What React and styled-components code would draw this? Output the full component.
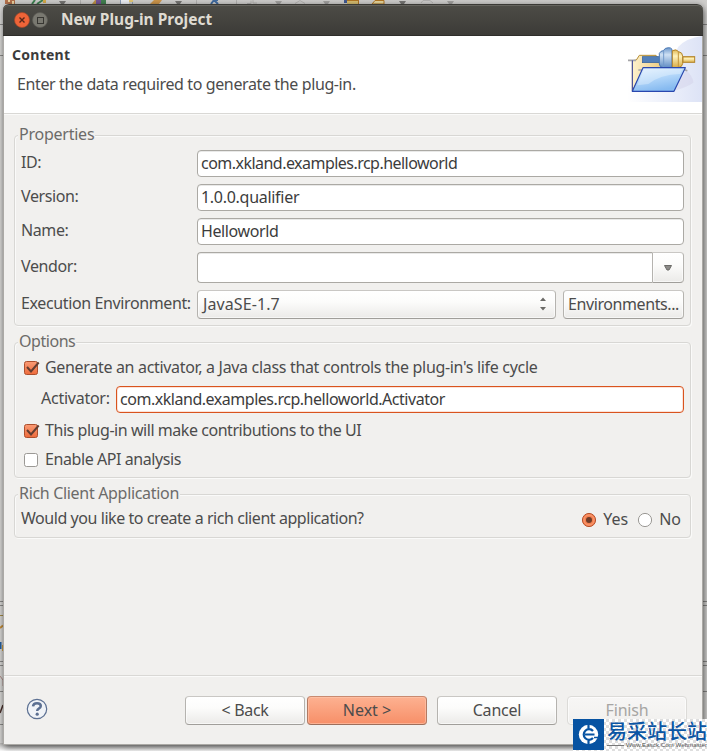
import React, { useState } from "react";
import styled, { createGlobalStyle, css } from "styled-components";

const GlobalStyle = createGlobalStyle`
  * {
    box-sizing: border-box;
  }
  body {
    margin: 0;
    overflow: hidden;
    font-family: "Noto Sans", "Liberation Sans", sans-serif;
    font-size: 16px;
    line-height: 20px;
    color: #4c4c4c;
  }
`;

const Desktop = styled.div`
  position: relative;
  width: 707px;
  height: 751px;
  padding: 4px 4px 6px 3px;
  overflow: hidden;
  background: linear-gradient(180deg, #cfcecc 0, #dad9d7 10px, #dad9d7 100%);
`;

const Backdrop = styled.svg`
  position: absolute;
  left: 0;
  top: 0;
`;

const Dialog = styled.div`
  position: relative;
  display: flex;
  flex-direction: column;
  width: 700px;
  height: 741px;
  border-radius: 6px 6px 0 0;
  background: #f1f0ee;
  box-shadow: 1px 2px 7px rgba(0, 0, 0, 0.65);
`;

const TitleBar = styled.div`
  display: flex;
  align-items: center;
  height: 32px;
  padding-left: 11px;
  border-radius: 6px 6px 0 0;
  border-top: 1px solid #3a3935;
  border-bottom: 1px solid #2f2e2b;
  background: linear-gradient(#4d4c46, #3c3b37);
  box-shadow: inset 0 1px #65645e;
`;

const TitleIcon = styled.svg`
  display: block;
  margin-right: 2px;
`;

const Title = styled.div`
  margin: -2px 0 0 11px;
  font-size: 15.5px;
  font-weight: bold;
  color: #dfdbd2;
`;

const Frame = styled.div`
  flex: 1;
  display: flex;
  flex-direction: column;
  border: 1px solid #aba9a5;
  border-top: 0;
`;

const Header = styled.div`
  display: flex;
  justify-content: space-between;
  height: 78px;
  background: #fff;
  border-bottom: 1px solid #d9d8d5;
`;

const HeaderText = styled.div`
  padding: 9px 0 0 8px;
`;

const Heading = styled.div`
  font-size: 14px;
  font-weight: bold;
  letter-spacing: 0.27px;
  color: #3c3c3c;
`;

const Message = styled.div`
  padding: 9px 0 0 5px;
  letter-spacing: -0.38px;
`;

const Page = styled.div`
  flex: 1;
  display: flex;
  flex-direction: column;
  gap: 16px;
  padding: 20px 11px 0 10px;
  border-top: 1px solid #fafaf9;
`;

const Group = styled.section`
  height: ${(p) => p.$height}px;
  border: 1px solid #d8d7d4;
  border-radius: 4px;
  box-shadow: 1px 1px #fafaf9, inset 1px 1px #fafaf9;
`;

const Legend = styled.div`
  width: max-content;
  margin: -12px 0 0 3px;
  padding: 0 1px;
  background: #f1f0ee;
  color: #6c6b69;
  letter-spacing: ${(p) => p.$spacing}px;
`;

const Fields = styled.div`
  display: flex;
  flex-direction: column;
  gap: 7px;
  padding: 6px 6px 0;
`;

const FieldRow = styled.div`
  display: flex;
  align-items: stretch;
`;

const Label = styled.label`
  display: flex;
  align-items: center;
  width: ${(p) => p.$width || 176}px;
  padding-bottom: 3px;
  white-space: nowrap;
  letter-spacing: ${(p) => p.$spacing}px;
`;

const Input = styled.input`
  flex: 1;
  min-width: 0;
  height: 27px;
  padding: 0 3px 2px;
  border: 1px solid ${(p) => (p.$focused ? "#d9531e" : "#aba9a4")};
  border-radius: 4px;
  outline: 0;
  background: #fff;
  box-shadow: ${(p) =>
    p.$focused ? "inset 0 0 0 1px #fbe3d9" : "inset 0 1px #e9e9e8"};
  font: inherit;
  color: #3c3c3c;
  letter-spacing: ${(p) => p.$spacing}px;
`;

const raised = css`
  border: 1px solid #b5b3af;
  border-top-color: #c9c7c4;
  border-bottom-color: #a09e9a;
  background: linear-gradient(#fff, #fcfcfb 40%, #ebeae8);
  box-shadow: inset 0 0 0 1px rgba(255, 255, 255, 0.6);
`;

const Combo = styled.div`
  flex: 1;
  display: flex;
  height: 31px;
`;

const ComboText = styled.div`
  flex: 1;
  border: 1px solid #aba9a4;
  border-right: 0;
  border-radius: 4px 0 0 4px;
  background: #fff;
  box-shadow: inset 0 1px #e9e9e8;
`;

const ComboButton = styled.div`
  ${raised}
  display: flex;
  align-items: center;
  justify-content: center;
  width: 32px;
  border-radius: 0 4px 4px 0;
`;

const Select = styled.div`
  ${raised}
  display: flex;
  align-items: center;
  justify-content: space-between;
  width: 359px;
  height: 29px;
  margin-right: 7px;
  padding: 0 8px 1px 5px;
  border-radius: 4px;
  letter-spacing: 0.1px;
`;

const Button = styled.button`
  ${raised}
  width: ${(p) => p.$width || 120}px;
  height: 29px;
  padding: 0 0 1px;
  border-radius: 4px;
  font: inherit;
  line-height: 20px;
  color: #4c4c4c;
  letter-spacing: ${(p) => p.$spacing || 0}px;
  ${(p) =>
    p.$primary &&
    css`
      border-color: #c98a70 #b27a63 #9d6e5b;
      background: linear-gradient(#fdb191, #f78f68);
      box-shadow: inset 0 0 0 1px rgba(255, 200, 175, 0.6);
    `}
  &:disabled {
    border-color: #dcdbd8;
    background: linear-gradient(#f7f6f5, #f1f0ee);
    color: #a6a5a3;
  }
`;

const Options = styled.div`
  padding: 5px 6px 0 9px;
`;

const CheckRow = styled.div`
  display: flex;
  gap: 6px;
  height: 20px;
  margin-top: ${(p) => p.$top}px;
  letter-spacing: ${(p) => p.$spacing}px;
`;

const CheckIcon = styled.svg`
  display: block;
  margin-top: 3px;
  overflow: visible;
`;

const ActivatorRow = styled(FieldRow)`
  margin-top: 9px;
  padding-left: 17px;
`;

const Question = styled.div`
  display: flex;
  justify-content: space-between;
  padding: 5px 9px 0 6px;
  letter-spacing: -0.44px;
`;

const Radios = styled.div`
  display: flex;
  gap: 10px;
  padding-top: 1px;
  letter-spacing: 0;
`;

const Radio = styled.label`
  display: flex;
  gap: 6px;
`;

const Footer = styled.div`
  display: flex;
  height: 69px;
  padding: 20px 15px 0 22px;
  border-top: 1px solid #d9d8d5;
  box-shadow: inset 0 1px #fafaf9;
`;

const Help = styled.svg`
  display: block;
  margin-top: 2px;
`;

const Buttons = styled.div`
  flex: 1;
  display: flex;
  justify-content: flex-end;
  gap: 10px;
`;

const Navigation = styled.div`
  display: flex;
  gap: 2px;
`;

const Watermark = styled.div`
  position: absolute;
  right: 0;
  bottom: 0;
  display: flex;
  width: 134px;
  height: 32px;
  background: repeating-conic-gradient(#dedede 0 25%, #fff 0 50%) 0 0 / 6px 6px;
`;

const WatermarkLogo = styled.svg`
  flex: none;
`;

const WatermarkText = styled.div`
  flex: 1;
  min-width: 0;
  padding: 2px 0 0 3px;
  white-space: nowrap;
`;

const WatermarkName = styled.div`
  height: 21px;
  font: 500 20px/20px "Noto Sans CJK SC", sans-serif;
  color: #0a55a4;
`;

const WatermarkUrl = styled.div`
  display: flex;
  align-items: center;
  gap: 2px;
  font: 6.2px/6px "Liberation Sans", sans-serif;
  color: #555;

  &::before {
    content: "";
    width: 17px;
    height: 1px;
    background: #777;
  }
`;

const DesktopDetails = () => (
  <Backdrop width="707" height="751">
    <defs>
      <linearGradient id="floor" x1="0" y1="0" x2="0" y2="1">
        <stop offset="0" stopColor="#b8b7b5" />
        <stop offset="1" stopColor="#fff" />
      </linearGradient>
    </defs>
    <rect x="0" y="743" width="707" height="8" fill="url(#floor)" />
    <path d="M5 0h10v4H5z" fill="#b4714c" />
    <path d="M8 0h2v2H8zM12 1h2v3h-2z" fill="#f1d6a2" />
    <path d="M32 4l3-4M37 4l6-4" stroke="#3f8352" strokeWidth="2" />
    <path d="M43 0h3v3h-3z" fill="#d8ac49" />
    <path d="M92 4l3-4h4v4z" fill="#c09446" />
    <path d="M96 0h6v4h-6z" fill="#755597" />
    <path d="M101 0h5v4h-5z" fill="#438252" />
    <path d="M120.500 4V0M132.500 0v4" stroke="#8d9fba" />
    <path d="M121 0h8v4h-8z" fill="#eef1f6" />
    <path d="M129 0h4v2h-4z" fill="#e5c975" />
    <path d="M150 4l4-4h8l-3 4z" fill="#cf974b" />
    <path d="M211 4l3-4 4 4M215 0h3" stroke="#426da2" strokeWidth="2" fill="none" />
    <path d="M347 1h11v3h-11z" fill="#dac071" />
    <path d="M346 0.500h12M358.500 0v4" stroke="#b37724" />
    <path d="M344 0h3v3h-3z" fill="#435c95" />
    <path d="M59 1h7l-2 3h-3zM175 1h7l-2 3h-3zM399 1h7l-2 3h-3z" transform="translate(0 0)" fill="#777674" />
    <path d="M275 1h7l-2 3h-3zM323 1h7l-2 3h-3zM447 1h7l-2 3h-3z" fill="#a3a2a0" />
    <path d="M372 4l3-3.500h9v3.500z" fill="#ead99e" stroke="#b37724" />
    <path d="M247 3.500h4v-3M253 0v3h4M295 3.500l5-3 5 3M421 3l2-2.500h7l3 2.500" stroke="#b5b4b2" fill="none" />
    <path d="M80.500 0v4M196.500 0v4M236.500 0v4" stroke="#b4b3b1" />
    <g stroke="#8d8c8a">
      <path d="M0 24.500h3M0 55.500h3M703 24.500h4M703 55.500h4" />
      <path d="M0 601.500h3M0 605.500h3M0 661.500h3M0 665.500h3M0 691.500h3M0 724.500h3" />
      <path d="M703 601.500h4M703 605.500h4M703 661.500h4M703 665.500h4M703 691.500h4" />
    </g>
    <path d="M0 615.500h3" stroke="#a58b45" />
    <path d="M0 628l3-2.500" stroke="#c68d35" strokeWidth="2" />
    <path d="M0 642h1.500v7H0z" fill="#2460a0" />
    <path d="M2 645h1v6H2z" fill="#d2a347" />
    <path d="M0 676l3 4v6" stroke="#ad8b86" fill="none" />
    <path d="M0 713l3-8" stroke="#4a302b" strokeWidth="1.500" />
  </Backdrop>
);

const BannerIcon = () => (
  <svg width="75" height="66" viewBox="81 108 225 198">
    <defs>
      <linearGradient id="sky" x1="0" x2="1">
        <stop offset="0" stopColor="#fff" />
        <stop offset="1" stopColor="#dde3f6" />
      </linearGradient>
      <linearGradient id="front" x1="0" y1="0" x2="0.4" y2="1">
        <stop offset="0" stopColor="#e1f0fe" />
        <stop offset="0.5" stopColor="#b5d8fa" />
        <stop offset="1" stopColor="#86baf0" />
      </linearGradient>
      <linearGradient id="back" x1="0" x2="1">
        <stop offset="0" stopColor="#fdf1cd" />
        <stop offset="1" stopColor="#eccb7f" />
      </linearGradient>
      <linearGradient id="steel" x1="0" y1="0" x2="0" y2="1">
        <stop offset="0" stopColor="#6a95ca" />
        <stop offset="0.35" stopColor="#cfe1f4" />
        <stop offset="1" stopColor="#5d8ac2" />
      </linearGradient>
      <linearGradient id="brass" x1="0" y1="0" x2="0" y2="1">
        <stop offset="0" stopColor="#e0b853" />
        <stop offset="0.35" stopColor="#fff3bd" />
        <stop offset="1" stopColor="#d8ab44" />
      </linearGradient>
    </defs>
    <path d="M81 306V260Q195 225 235 140Q260 114 306 108V306z" fill="url(#sky)" />
    <path d="M222 272l36-62q22 20 22 38q-20 14-58 24z" fill="#cfcde5" opacity="0.4" />
    <path d="M97 272V182l12-2 9-14h50l8 10h12v32l-60 6z" fill="url(#back)" stroke="#b68e35" strokeWidth="3" />
    <path d="M84 181h24M115 210h18M248 207l14 5" stroke="#a5a5a8" strokeWidth="5" />
    <path d="M97 274V181" stroke="#3846a9" strokeWidth="3" />
    <rect x="127" y="170" width="54" height="18" fill="#527fb9" stroke="#315e9b" strokeWidth="2" />
    <path d="M178 160q4-8 12-8q4-9 16-9q7 0 10 5v56h-26q-12-3-12-12z" fill="url(#steel)" stroke="#4a78b4" strokeWidth="3" />
    <path d="M191 152v50" stroke="#7299ca" strokeWidth="3" />
    <path d="M217 152q12-6 19 3q12 2 12 14v22q-2 10-12 12h-19z" fill="url(#brass)" stroke="#b3842a" strokeWidth="3" />
    <path d="M235 156v46" stroke="#c4963a" strokeWidth="3" />
    <rect x="249" y="170" width="35" height="17" fill="url(#brass)" stroke="#b3842a" strokeWidth="3" />
    <path d="M97 274l32-71h127l-34 71z" fill="url(#front)" stroke="#2947ae" strokeWidth="3.500" strokeLinejoin="round" />
    <path d="M132 207h115l-7 15q-60 2-95 30l-33 4z" fill="#fff" opacity="0.3" />
  </svg>
);

const CheckBox = ({ checked }) => (
  <CheckIcon width="15" height="16">
    <defs>
      <linearGradient id="orange" x1="0" y1="0" x2="0" y2="1">
        <stop offset="0" stopColor="#fa9b75" />
        <stop offset="1" stopColor="#ee6b3b" />
      </linearGradient>
    </defs>
    <rect
      x="0.500" y="1.500" width="13" height="13" rx="2"
      fill={checked ? "url(#orange)" : "#fff"}
      stroke={checked ? "#ad4f2d" : "#9b9995"}
    />
    {checked && <path d="M3 7l4 4.500L14.700 2.500" fill="none" stroke="#633d30" strokeWidth="2" />}
  </CheckIcon>
);

const RadioButton = ({ checked }) => (
  <CheckIcon width="15" height="16">
    <circle
      cx="7" cy="8" r="6.600"
      fill={checked ? "#f4804f" : "#fff"}
      stroke={checked ? "#b7532f" : "#9b9995"}
    />
    {checked && <circle cx="7" cy="8" r="5" fill="none" stroke="#fa9d76" />}
    {checked && <circle cx="7" cy="8" r="3" fill="#6e3c29" />}
  </CheckIcon>
);

const App = () => {
  const [id, setId] = useState("com.xkland.examples.rcp.helloworld");
  const [version, setVersion] = useState("1.0.0.qualifier");
  const [name, setName] = useState("Helloworld");
  const [activator, setActivator] = useState("com.xkland.examples.rcp.helloworld.Activator");

  return (
    <Desktop>
      <GlobalStyle />
      <DesktopDetails />
      <Dialog>
        <TitleBar>
          <TitleIcon width="16" height="16">
            <circle cx="8" cy="8" r="7.500" fill="#ee6438" stroke="#a5472a" strokeWidth="0.700" />
            <path d="M5.500 5.500l5 5M10.500 5.500l-5 5" stroke="#55271a" strokeWidth="1.400" />
          </TitleIcon>
          <TitleIcon width="16" height="16">
            <circle cx="8" cy="8" r="7.500" fill="#797870" stroke="#5d5c56" strokeWidth="0.700" />
            <rect x="5.500" y="5.500" width="6" height="6" fill="none" stroke="#373632" />
          </TitleIcon>
          <Title>New Plug-in Project</Title>
        </TitleBar>
        <Frame>
          <Header>
            <HeaderText>
              <Heading>Content</Heading>
              <Message>Enter the data required to generate the plug-in.</Message>
            </HeaderText>
            <BannerIcon />
          </Header>
          <Page>
            <Group $height={191}>
              <Legend $spacing={-0.24}>Properties</Legend>
              <Fields>
                <FieldRow>
                  <Label $spacing={-0.4}>ID:</Label>
                  <Input $spacing={-0.53} value={id} onChange={(e) => setId(e.target.value)} />
                </FieldRow>
                <FieldRow>
                  <Label $spacing={-0.38}>Version:</Label>
                  <Input $spacing={-0.29} value={version} onChange={(e) => setVersion(e.target.value)} />
                </FieldRow>
                <FieldRow>
                  <Label $spacing={-0.4}>Name:</Label>
                  <Input $spacing={-0.38} value={name} onChange={(e) => setName(e.target.value)} />
                </FieldRow>
                <FieldRow>
                  <Label $spacing={-0.4}>Vendor:</Label>
                  <Combo>
                    <ComboText />
                    <ComboButton>
                      <svg width="8" height="6">
                        <path d="M0.500 0.500h7L5 5H3z" fill="#8c8b88" stroke="#6b6a67" />
                      </svg>
                    </ComboButton>
                  </Combo>
                </FieldRow>
                <FieldRow>
                  <Label $spacing={-0.38}>Execution Environment:</Label>
                  <Select>
                    JavaSE-1.7
                    <svg width="8" height="14">
                      <path d="M1 4l3-3.500L7 4zM1 10l3 3.500L7 10z" fill="#6b6a67" />
                    </svg>
                  </Select>
                  <Button $width={121} $spacing={-0.42}>Environments...</Button>
                </FieldRow>
              </Fields>
            </Group>
            <Group $height={136}>
              <Legend $spacing={-0.45}>Options</Legend>
              <Options>
                <CheckRow $top={1} $spacing={-0.32}>
                  <CheckBox checked />
                  Generate an activator, a Java class that controls the plug-in's life cycle
                </CheckRow>
                <ActivatorRow>
                  <Label $width={75} $spacing={-0.25}>Activator:</Label>
                  <Input $focused $spacing={-0.47} value={activator} onChange={(e) => setActivator(e.target.value)} />
                </ActivatorRow>
                <CheckRow $top={7} $spacing={-0.45}>
                  <CheckBox checked />
                  This plug-in will make contributions to the UI
                </CheckRow>
                <CheckRow $top={9} $spacing={-0.42}>
                  <CheckBox />
                  Enable API analysis
                </CheckRow>
              </Options>
            </Group>
            <Group $height={44}>
              <Legend $spacing={-0.32}>Rich Client Application</Legend>
              <Question>
                Would you like to create a rich client application?
                <Radios>
                  <Radio><RadioButton checked />Yes</Radio>
                  <Radio><RadioButton />No</Radio>
                </Radios>
              </Question>
            </Group>
          </Page>
          <Footer>
            <Help width="22" height="22">
              <circle cx="11" cy="11" r="9.700" fill="#f0f3f7" stroke="#5c7092" strokeWidth="1.200" />
              <path d="M7 8.300Q7.300 5.200 11 5.200q3.800 0 3.800 2.900q0 1.500-2 2.600q-1.600 0.900-1.600 2.300" fill="none" stroke="#5c7092" strokeWidth="2.500" />
              <circle cx="11.200" cy="16.200" r="1.600" fill="#5c7092" />
            </Help>
            <Buttons>
              <Navigation>
                <Button $spacing={-0.3}>&lt; Back</Button>
                <Button $primary>Next &gt;</Button>
              </Navigation>
              <Button $spacing={-0.2}>Cancel</Button>
              <Button $spacing={-0.2} disabled>Finish</Button>
            </Buttons>
          </Footer>
        </Frame>
      </Dialog>
      <Watermark>
        <WatermarkLogo width="31" height="31">
          <rect width="31" height="31" fill="#0753a2" />
          <circle cx="15.500" cy="15.500" r="9.700" fill="#fff" />
          <path d="M20 12A5.300 5.300 0 1 0 20 19M12 15.500h9.500M15.500 5v5.500M15.500 20.500v6" fill="none" stroke="#0753a2" strokeWidth="2.200" />
          <path d="M21 18.500h6" stroke="#0753a2" strokeWidth="1.500" />
        </WatermarkLogo>
        <WatermarkText>
          <WatermarkName>易采站长站</WatermarkName>
          <WatermarkUrl>Www.Easck.Com Webmaster</WatermarkUrl>
        </WatermarkText>
      </Watermark>
    </Desktop>
  );
};

export default App;
